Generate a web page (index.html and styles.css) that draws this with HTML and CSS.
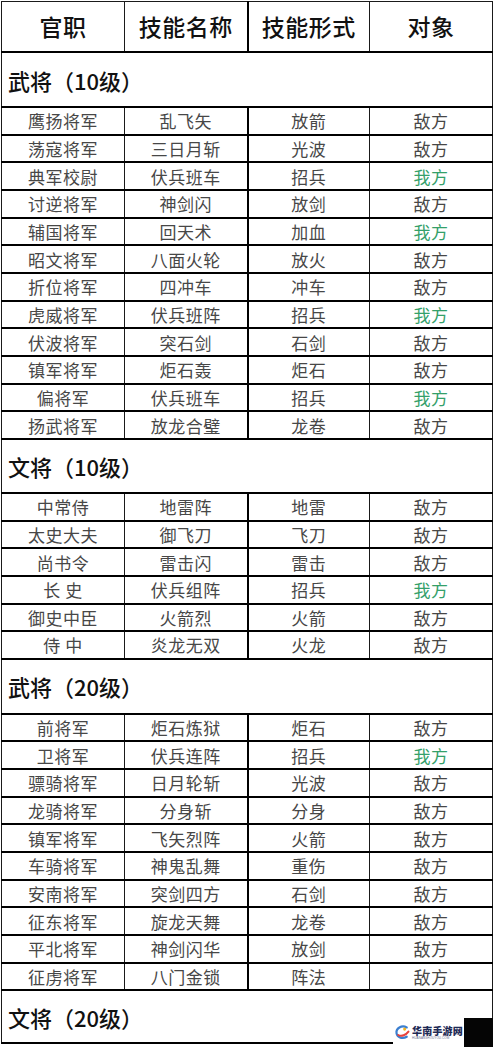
FILE: index.html
```html
<!DOCTYPE html>
<html lang="zh-CN">
<head>
<meta charset="utf-8">
<link rel="stylesheet" href="styles.css">
</head>
<body>
<div class="page">
<table class="skills">
<colgroup><col class="c1"><col class="c2"><col class="c3"><col class="c4"></colgroup>
<tbody>
<tr class="head"><td>官职</td><td>技能名称</td><td class="mid">技能形式</td><td>对象</td></tr>

<tr class="sec"><td colspan="4">武将（10级）</td></tr>
<tr class="row"><td>鹰扬将军</td><td>乱飞矢</td><td class="mid">放箭</td><td>敌方</td></tr>
<tr class="row"><td>荡寇将军</td><td>三日月斩</td><td class="mid">光波</td><td>敌方</td></tr>
<tr class="row"><td>典军校尉</td><td>伏兵班车</td><td class="mid">招兵</td><td class="ally">我方</td></tr>
<tr class="row"><td>讨逆将军</td><td>神剑闪</td><td class="mid">放剑</td><td>敌方</td></tr>
<tr class="row"><td>辅国将军</td><td>回天术</td><td class="mid">加血</td><td class="ally">我方</td></tr>
<tr class="row"><td>昭文将军</td><td>八面火轮</td><td class="mid">放火</td><td>敌方</td></tr>
<tr class="row"><td>折位将军</td><td>四冲车</td><td class="mid">冲车</td><td>敌方</td></tr>
<tr class="row"><td>虎威将军</td><td>伏兵班阵</td><td class="mid">招兵</td><td class="ally">我方</td></tr>
<tr class="row"><td>伏波将军</td><td>突石剑</td><td class="mid">石剑</td><td>敌方</td></tr>
<tr class="row"><td>镇军将军</td><td>炬石轰</td><td class="mid">炬石</td><td>敌方</td></tr>
<tr class="row"><td>偏将军</td><td>伏兵班车</td><td class="mid">招兵</td><td class="ally">我方</td></tr>
<tr class="row"><td>扬武将军</td><td>放龙合璧</td><td class="mid">龙卷</td><td>敌方</td></tr>

<tr class="sec sec2"><td colspan="4">文将（10级）</td></tr>
<tr class="row"><td>中常侍</td><td>地雷阵</td><td class="mid">地雷</td><td>敌方</td></tr>
<tr class="row"><td>太史大夫</td><td>御飞刀</td><td class="mid">飞刀</td><td>敌方</td></tr>
<tr class="row"><td>尚书令</td><td>雷击闪</td><td class="mid">雷击</td><td>敌方</td></tr>
<tr class="row"><td>长 史</td><td>伏兵组阵</td><td class="mid">招兵</td><td class="ally">我方</td></tr>
<tr class="row"><td>御史中臣</td><td>火箭烈</td><td class="mid">火箭</td><td>敌方</td></tr>
<tr class="row"><td>侍 中</td><td>炎龙无双</td><td class="mid">火龙</td><td>敌方</td></tr>

<tr class="sec"><td colspan="4">武将（20级）</td></tr>
<tr class="row"><td>前将军</td><td>炬石炼狱</td><td class="mid">炬石</td><td>敌方</td></tr>
<tr class="row"><td>卫将军</td><td>伏兵连阵</td><td class="mid">招兵</td><td class="ally">我方</td></tr>
<tr class="row"><td>骠骑将军</td><td>日月轮斩</td><td class="mid">光波</td><td>敌方</td></tr>
<tr class="row"><td>龙骑将军</td><td>分身斩</td><td class="mid">分身</td><td>敌方</td></tr>
<tr class="row"><td>镇军将军</td><td>飞矢烈阵</td><td class="mid">火箭</td><td>敌方</td></tr>
<tr class="row"><td>车骑将军</td><td>神鬼乱舞</td><td class="mid">重伤</td><td>敌方</td></tr>
<tr class="row"><td>安南将军</td><td>突剑四方</td><td class="mid">石剑</td><td>敌方</td></tr>
<tr class="row"><td>征东将军</td><td>旋龙天舞</td><td class="mid">龙卷</td><td>敌方</td></tr>
<tr class="row"><td>平北将军</td><td>神剑闪华</td><td class="mid">放剑</td><td>敌方</td></tr>
<tr class="row"><td>征虏将军</td><td>八门金锁</td><td class="mid">阵法</td><td>敌方</td></tr>

<tr class="sec sec4"><td colspan="4">文将（20级）</td></tr>
</tbody>
</table>

<div class="watermark">
  <svg class="wm-logo" viewBox="0 0 20 20" width="17" height="17">
    <path d="M15 4 C9 1 2 5 3 11 C4 16 10 18 15 15" fill="none" stroke="#3b7fd0" stroke-width="2.6" stroke-linecap="round"/>
    <path d="M5 13 C9 15 14 13 17 9" fill="none" stroke="#e8423c" stroke-width="2.4" stroke-linecap="round"/>
    <circle cx="12.5" cy="6" r="1.8" fill="#f2b21c"/>
  </svg>
  <div class="wm-text">
    <span class="wm-name">华南手游网</span>
    <span class="wm-sub">HUANANSHOUYOU.COM</span>
  </div>
</div>
<div class="wm-dark"></div>
</div>
</body>
</html>
```

FILE: styles.css
```css
html, body {
  margin: 0;
  padding: 0;
  background: #ffffff;
}

.page {
  position: relative;
  width: 493px;
  height: 1047px;
  overflow: hidden;
  padding: 1px 1px 0 1px;
  box-sizing: border-box;
}

.skills {
  width: 491px;
  border-collapse: collapse;
  table-layout: fixed;
  font-family: "Noto Sans CJK SC", "Noto Sans", sans-serif;
}

.c1 { width: 123px; }
.c2 { width: 123px; }
.c3 { width: 122px; }
.c4 { width: 123px; }

.skills td {
  border: 1px solid #1a1a1a;
  border-top: 2px solid #000;
  border-bottom: 2px solid #000;
  text-align: center;
  vertical-align: middle;
  padding: 0;
  color: #474747;
  font-size: 17px;
  line-height: 1;
  letter-spacing: 0.5px;
}

.skills td.mid {
  border-left: 2px solid #000;
}

.skills .head td {
  height: 49px;
  font-size: 23px;
  font-weight: 500;
  color: #111;
  letter-spacing: 0.5px;
  border-top: 1px solid #1a1a1a;
}

.skills .sec td {
  height: 53px;
  text-align: left;
  padding-left: 6px;
  font-size: 22px;
  font-weight: 500;
  color: #111;
  letter-spacing: 0;
  border-left: 1px solid #1a1a1a;
  border-right: 1px solid #1a1a1a;
}

.skills .sec2 td {
  height: 52px;
}

.skills .sec4 td {
  height: 51px;
}

.skills .row td {
  height: 25.67px;
}

.skills td.ally {
  color: #34a06a;
}

.watermark {
  position: absolute;
  left: 393px;
  top: 1017px;
  width: 71px;
  height: 30px;
  background: #ffffff;
  display: flex;
  align-items: center;
  gap: 1px;
  padding-left: 1px;
  box-sizing: border-box;
}

.wm-logo {
  flex: none;
}

.wm-text {
  display: flex;
  flex-direction: column;
  align-items: flex-start;
  font-family: "Noto Sans CJK SC", sans-serif;
}

.wm-name {
  font-size: 10px;
  font-weight: 900;
  color: #1e2a55;
  line-height: 11px;
  letter-spacing: 0.2px;
}

.wm-sub {
  font-size: 3px;
  color: #6a7090;
  line-height: 4px;
  font-family: "Liberation Sans", sans-serif;
  letter-spacing: 0.1px;
}

.wm-dark {
  position: absolute;
  left: 464px;
  top: 1018px;
  width: 29px;
  height: 29px;
  background: #050505;
}
```
